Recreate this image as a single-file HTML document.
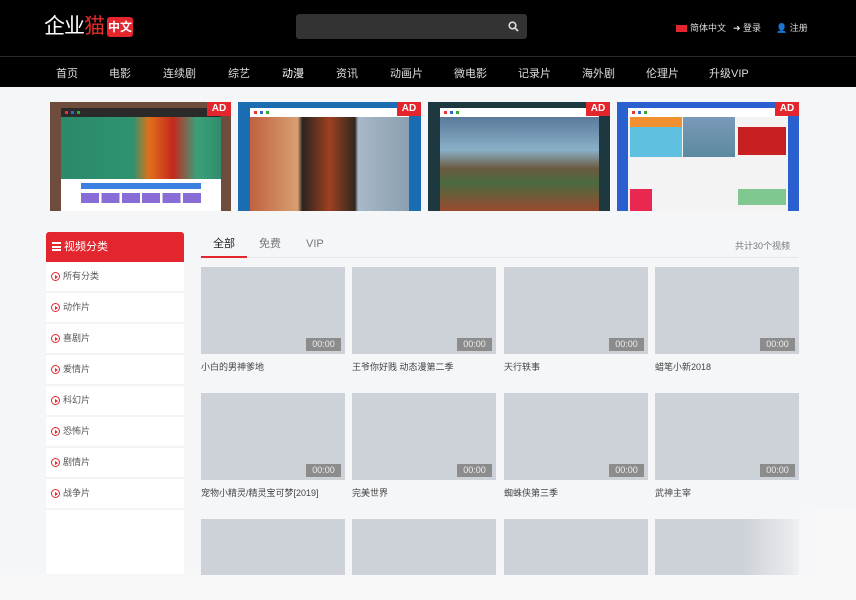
<!DOCTYPE html>
<html><head><meta charset="utf-8">
<style>
*{margin:0;padding:0;box-sizing:border-box}
html,body{width:856px;height:600px;overflow:hidden}
body{background:#f5f6f8;font-family:"Liberation Sans","Noto Sans CJK SC",sans-serif;position:relative}
.hd{position:absolute;left:0;top:0;width:856px;height:56px;background:#000}
.logo{position:absolute;left:44px;top:14px;font-size:21px;color:#fff;letter-spacing:-1px;white-space:nowrap;line-height:26px}
.logo .r{color:#e02b2b}
.logo .b{position:absolute;left:63px;top:3px;background:#e3262e;color:#fff;font-size:12px;font-weight:bold;border-radius:3px;letter-spacing:0;width:26px;height:20px;line-height:20px;text-align:center;white-space:nowrap}
.search{position:absolute;left:296px;top:14px;width:231px;height:25px;background:#333;border-radius:3px}
.tr{position:absolute;top:21px;font-size:9px;color:#ddd;white-space:nowrap}
.nav{position:absolute;left:0;top:56px;width:856px;height:31px;background:#000;border-top:1px solid #2a2a2a}
.nav span{position:absolute;top:8px;font-size:11px;color:#ddd}
.bn{position:absolute;top:102px;height:109px;overflow:hidden}
.in{position:absolute;left:11px;top:6px;width:160px;height:103px;background:#fff}
.tb{height:9px;background:#2a2a2a;position:relative}
.dots{position:absolute;left:4px;top:3px;width:18px;height:3px;background:linear-gradient(90deg,#e33 0 3px,transparent 3px 6px,#36c 6px 9px,transparent 9px 12px,#3a3 12px 15px,transparent 15px)}
.ad{position:absolute;right:0;top:0;width:24px;height:14px;background:#e3262e;color:#fff;font-size:10px;font-weight:bold;text-align:center;line-height:14px}
.side{position:absolute;left:46px;top:232px;width:138px;height:342px;background:#fff}
.sh{height:30px;background:#e3262e;color:#fff;font-size:11px;line-height:30px;padding-left:18px;border-radius:3px 3px 0 0;position:relative}
.sh i{position:absolute;left:6px;top:10px;width:9px;height:9px;border-top:2px solid #fff;border-bottom:2px solid #fff}
.sh i:after{content:"";position:absolute;left:0;top:1.5px;width:9px;height:2px;background:#fff}
.si{height:31px;border-bottom:2px solid #f4f4f6;font-size:9px;color:#555;line-height:29px;padding-left:17px;position:relative}
.si:before{content:"";position:absolute;left:5px;top:10px;width:7px;height:7px;border:1.3px solid #e3262e;border-radius:50%}
.si:after{content:"";position:absolute;left:8.5px;top:12.5px;border-left:3px solid #e3262e;border-top:2px solid transparent;border-bottom:2px solid transparent}
.tabs{position:absolute;left:201px;top:232px;width:597px;height:26px;border-bottom:1px solid #e6e6e6}
.tabs span{position:absolute;top:5px;font-size:11px;line-height:14px;color:#777}
.card{position:absolute;width:144px}
.th{height:87px;background:#cdd1d8;position:relative}
.tm{position:absolute;right:4px;bottom:3px;width:35px;height:13px;background:#8c8c8c;color:#eee;font-size:9px;text-align:center;line-height:13px}
.tt{font-size:9px;color:#444;margin-top:6px}
.fade{position:absolute;left:0;top:575px;width:856px;height:25px;background:#f8f8f8}
</style></head><body>
<div class="hd">
 <div class="logo">企业<span class="r">猫</span><span class="b">中文</span></div>
 <div class="search"><svg style="position:absolute;right:8px;top:7px" width="11" height="11" viewBox="0 0 11 11"><circle cx="4.5" cy="4.5" r="3.3" fill="none" stroke="#ddd" stroke-width="1.6"/><path d="M7 7L10 10" stroke="#ddd" stroke-width="1.8"/></svg></div>
 <div class="tr" style="left:676px"><span style="display:inline-block;width:11px;height:7px;background:#e3262e;vertical-align:-1px;margin-right:3px"></span>简体中文</div>
 <div class="tr" style="left:733px">➜ 登录</div>
 <div class="tr" style="left:776px">👤 注册</div>
</div>
<div class="nav">
 <span style="left:56px">首页</span><span style="left:109px">电影</span><span style="left:163px">连续剧</span><span style="left:228px">综艺</span><span style="left:282px;color:#fff">动漫</span><span style="left:336px">资讯</span><span style="left:390px">动画片</span><span style="left:454px">微电影</span><span style="left:518px">记录片</span><span style="left:582px">海外剧</span><span style="left:646px">伦理片</span><span style="left:709px">升级VIP</span>
</div>

<div class="bn" style="left:50px;width:181px;background:#6e4c3e">
 <div class="in"><div class="tb"><div class="dots"></div></div>
 <div style="height:62px;background:linear-gradient(90deg,#2a8a6a 0,#2e9270 45%,#e0701a 55%,#c5281e 70%,#3aa07a 85%,#2f8d6c 100%)"></div>
 <div style="margin:4px 20px;height:6px;background:#3b7fe0"></div>
 <div style="margin:2px 20px;height:10px;background:linear-gradient(90deg,#8a6cd6 0 15%,#fff 15% 17%,#8a6cd6 17% 32%,#fff 32% 34%,#8a6cd6 34% 49%,#fff 49% 51%,#8a6cd6 51% 66%,#fff 66% 68%,#8a6cd6 68% 83%,#fff 83% 85%,#8a6cd6 85%)"></div>
 </div><div class="ad">AD</div></div>

<div class="bn" style="left:238px;width:183px;background:#1a6db0">
 <div class="in" style="left:12px;width:159px"><div class="tb" style="background:#fff"><div class="dots"></div></div>
 <div style="height:94px;background:linear-gradient(90deg,#c06040 0,#d8a070 30%,#2a2420 33%,#a04020 50%,#302820 66%,#a8b8c8 68%,#8aa0b0 100%)"></div>
 </div><div class="ad">AD</div></div>

<div class="bn" style="left:428px;width:182px;background:#1e3840">
 <div class="in" style="left:12px;width:159px"><div class="tb" style="background:#fff"><div class="dots"></div></div>
 <div style="height:94px;background:linear-gradient(180deg,#5a7a9a 0,#8ab0c8 35%,#6a5a40 55%,#4a6a40 70%,#9a4a30 100%)"></div>
 </div><div class="ad">AD</div></div>

<div class="bn" style="left:617px;width:182px;background:#2a5fd0">
 <div class="in" style="left:11px;width:160px"><div class="tb" style="background:#fff"><div class="dots"></div></div>
 <div style="height:94px;background:#f3f3f3;position:relative">
  <div style="position:absolute;left:2px;top:0;width:52px;height:40px;background:linear-gradient(180deg,#f09030 0 10px,#60c0e0 10px)"></div>
  <div style="position:absolute;left:55px;top:0;width:52px;height:40px;background:linear-gradient(180deg,#7a9ab8,#5a8aa0)"></div>
  <div style="position:absolute;left:110px;top:10px;width:48px;height:28px;background:#c82020"></div>
  <div style="position:absolute;left:110px;top:72px;width:48px;height:16px;background:#80c890"></div>
  <div style="position:absolute;left:2px;top:72px;width:22px;height:22px;background:#e82850"></div>
 </div></div><div class="ad">AD</div></div>

<div class="side">
 <div class="sh"><i></i>视频分类</div>
 <div class="si">所有分类</div><div class="si">动作片</div><div class="si">喜剧片</div><div class="si">爱情片</div><div class="si">科幻片</div><div class="si">恐怖片</div><div class="si">剧情片</div><div class="si">战争片</div>
</div>

<div class="tabs">
 <span style="left:12px;color:#222">全部</span><span style="left:58px">免费</span><span style="left:105px">VIP</span>
 <div style="position:absolute;left:0;bottom:-1px;width:46px;height:2px;background:#e3262e"></div>
 <span style="right:8px;font-size:9px;top:7px">共计30个视频</span>
</div>

<div class="card" style="left:201px;top:267px"><div class="th"><div class="tm">00:00</div></div><div class="tt">小白的男神爹地</div></div>
<div class="card" style="left:352px;top:267px"><div class="th"><div class="tm">00:00</div></div><div class="tt">王爷你好贱 动态漫第二季</div></div>
<div class="card" style="left:504px;top:267px"><div class="th"><div class="tm">00:00</div></div><div class="tt">天行轶事</div></div>
<div class="card" style="left:655px;top:267px"><div class="th"><div class="tm">00:00</div></div><div class="tt">蜡笔小新2018</div></div>
<div class="card" style="left:201px;top:393px"><div class="th"><div class="tm">00:00</div></div><div class="tt">宠物小精灵/精灵宝可梦[2019]</div></div>
<div class="card" style="left:352px;top:393px"><div class="th"><div class="tm">00:00</div></div><div class="tt">完美世界</div></div>
<div class="card" style="left:504px;top:393px"><div class="th"><div class="tm">00:00</div></div><div class="tt">蜘蛛侠第三季</div></div>
<div class="card" style="left:655px;top:393px"><div class="th"><div class="tm">00:00</div></div><div class="tt">武神主宰</div></div>
<div class="card" style="left:201px;top:519px"><div class="th" style="height:56px"></div></div>
<div class="card" style="left:352px;top:519px"><div class="th" style="height:56px"></div></div>
<div class="card" style="left:504px;top:519px"><div class="th" style="height:56px"></div></div>
<div class="card" style="left:655px;top:519px"><div class="th" style="height:56px;background:linear-gradient(90deg,#cdd1d8 60%,#eceef1)"></div></div>
<div style="position:absolute;left:790px;top:510px;width:66px;height:65px;background:linear-gradient(90deg,rgba(248,248,248,0),#f8f8f8 60%)"></div>
<div class="fade"></div>
</body></html>
